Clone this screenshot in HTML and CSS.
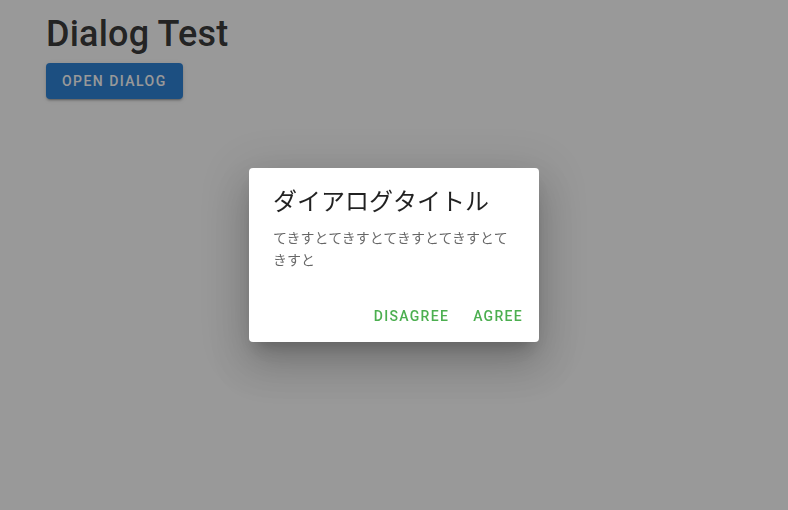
FILE: index.html
```html
<!DOCTYPE html>
<html lang="ja">
<head>
<meta charset="utf-8">
<title>Dialog Test</title>
<link rel="stylesheet" href="styles.css">
</head>
<body>
<div class="app">
  <main class="container">
    <h1 class="page-title">Dialog Test</h1>
    <button class="btn btn-primary">Open Dialog</button>
  </main>
</div>
<div class="overlay"></div>
<div class="dialog-layer">
  <div class="dialog">
    <div class="dialog-title">ダイアログタイトル</div>
    <div class="dialog-text">てきすとてきすとてきすとてきすとてきすと</div>
    <div class="dialog-actions">
      <button class="btn btn-text">Disagree</button>
      <button class="btn btn-text">Agree</button>
    </div>
  </div>
</div>
</body>
</html>
```

FILE: styles.css
```css
* { box-sizing: border-box; }
html, body { margin: 0; padding: 0; }
body {
  width: 788px;
  height: 510px;
  overflow: hidden;
  background: #fff;
  font-family: Roboto, "Noto Sans CJK JP", sans-serif;
  color: rgba(0, 0, 0, 0.87);
}
.container {
  padding: 12px 46px;
  display: flex;
  flex-direction: column;
  align-items: flex-start;
}
.page-title {
  margin: 0 0 7px;
  font-size: 36px;
  line-height: 44px;
  font-weight: 500;
  letter-spacing: 0.2px;
}
.btn {
  font-family: Roboto, sans-serif;
  font-size: 14px;
  font-weight: 500;
  letter-spacing: 1.3px;
  text-transform: uppercase;
  height: 36px;
  padding: 0 16px;
  border: 0;
  border-radius: 4px;
  background: transparent;
  cursor: pointer;
}
.btn-primary {
  background: #1976d2;
  color: #fff;
  letter-spacing: 1.45px;
  box-shadow: 0 3px 1px -2px rgba(0,0,0,.2), 0 2px 2px 0 rgba(0,0,0,.14), 0 1px 5px 0 rgba(0,0,0,.12);
}
.overlay {
  position: fixed;
  inset: 0;
  background: rgba(33, 33, 33, 0.46);
}
.dialog-layer {
  position: fixed;
  inset: 0;
  display: flex;
  align-items: center;
  justify-content: center;
}
.dialog {
  width: 290px;
  background: #fff;
  border-radius: 4px;
  box-shadow: 0 11px 15px -7px rgba(0,0,0,.2), 0 24px 38px 3px rgba(0,0,0,.14), 0 9px 46px 8px rgba(0,0,0,.12);
}
.dialog-title {
  padding: 16px 24px 10px;
  font-family: "Noto Sans CJK JP", sans-serif;
  font-size: 24px;
  line-height: 32px;
  font-weight: 400;
  color: rgba(0, 0, 0, 0.87);
}
.dialog-text {
  padding: 0 24px 20px;
  font-family: "Noto Sans CJK JP", sans-serif;
  font-size: 14px;
  line-height: 22px;
  color: rgba(0, 0, 0, 0.6);
}
.dialog-actions {
  display: flex;
  justify-content: flex-end;
  align-items: center;
  gap: 8px;
  padding: 8px;
}
.btn-text {
  color: #4caf50;
  padding: 0 8px;
}
```
